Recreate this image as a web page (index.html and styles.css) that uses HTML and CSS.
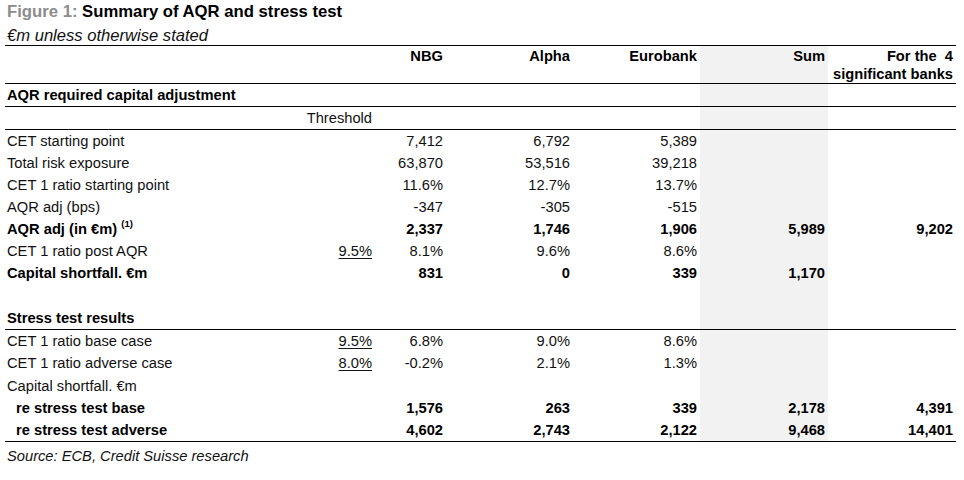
FILE: index.html
```html
<!DOCTYPE html>
<html>
<head>
<meta charset="utf-8">
<link rel="stylesheet" href="styles.css">
</head>
<body>
<div class="figure">
  <div class="title"><span class="fig">Figure 1:</span> Summary of AQR and stress test</div>
  <div class="subtitle">€m unless otherwise stated</div>
  <table class="tbl">
    <colgroup>
      <col class="c-label"><col class="c-thr"><col class="c-nbg"><col class="c-alpha"><col class="c-euro"><col class="c-sum"><col class="c-four">
    </colgroup>
    <tr class="head line-b">
      <td class="lbl"></td><td></td><td class="num">NBG</td><td class="num">Alpha</td><td class="num">Eurobank</td><td class="num sum">Sum</td><td class="num">For the&nbsp; 4<br>significant banks</td>
    </tr>
    <tr class="sect line-b">
      <td class="lbl b">AQR required capital adjustment</td><td></td><td></td><td></td><td></td><td class="sum"></td><td></td>
    </tr>
    <tr class="row line-b">
      <td class="lbl"></td><td class="num">Threshold</td><td></td><td></td><td></td><td class="sum"></td><td></td>
    </tr>
    <tr class="row">
      <td class="lbl">CET starting point</td><td></td><td class="num">7,412</td><td class="num">6,792</td><td class="num">5,389</td><td class="sum"></td><td></td>
    </tr>
    <tr class="row">
      <td class="lbl">Total risk exposure</td><td></td><td class="num">63,870</td><td class="num">53,516</td><td class="num">39,218</td><td class="sum"></td><td></td>
    </tr>
    <tr class="row">
      <td class="lbl">CET 1 ratio starting point</td><td></td><td class="num">11.6%</td><td class="num">12.7%</td><td class="num">13.7%</td><td class="sum"></td><td></td>
    </tr>
    <tr class="row">
      <td class="lbl">AQR adj (bps)</td><td></td><td class="num">-347</td><td class="num">-305</td><td class="num">-515</td><td class="sum"></td><td></td>
    </tr>
    <tr class="row b">
      <td class="lbl">AQR adj (in €m) <sup>(1)</sup></td><td></td><td class="num">2,337</td><td class="num">1,746</td><td class="num">1,906</td><td class="num sum">5,989</td><td class="num">9,202</td>
    </tr>
    <tr class="row">
      <td class="lbl">CET 1 ratio post AQR</td><td class="num"><span class="u">9.5%</span></td><td class="num">8.1%</td><td class="num">9.6%</td><td class="num">8.6%</td><td class="sum"></td><td></td>
    </tr>
    <tr class="row b">
      <td class="lbl">Capital shortfall. €m</td><td></td><td class="num">831</td><td class="num">0</td><td class="num">339</td><td class="num sum">1,170</td><td></td>
    </tr>
    <tr class="row">
      <td class="lbl"></td><td></td><td></td><td></td><td></td><td class="sum"></td><td></td>
    </tr>
    <tr class="sect2 line-b">
      <td class="lbl b">Stress test results</td><td></td><td></td><td></td><td></td><td class="sum"></td><td></td>
    </tr>
    <tr class="row">
      <td class="lbl">CET 1 ratio base case</td><td class="num"><span class="u">9.5%</span></td><td class="num">6.8%</td><td class="num">9.0%</td><td class="num">8.6%</td><td class="sum"></td><td></td>
    </tr>
    <tr class="row">
      <td class="lbl">CET 1 ratio adverse case</td><td class="num"><span class="u">8.0%</span></td><td class="num">-0.2%</td><td class="num">2.1%</td><td class="num">1.3%</td><td class="sum"></td><td></td>
    </tr>
    <tr class="row tall">
      <td class="lbl">Capital shortfall. €m</td><td></td><td></td><td></td><td></td><td class="sum"></td><td></td>
    </tr>
    <tr class="row b">
      <td class="lbl ind">re stress test base</td><td></td><td class="num">1,576</td><td class="num">263</td><td class="num">339</td><td class="num sum">2,178</td><td class="num">4,391</td>
    </tr>
    <tr class="row b line-b">
      <td class="lbl ind">re stress test adverse</td><td></td><td class="num">4,602</td><td class="num">2,743</td><td class="num">2,122</td><td class="num sum">9,468</td><td class="num">14,401</td>
    </tr>
  </table>
  <div class="source">Source: ECB, Credit Suisse research</div>
</div>
</body>
</html>
```

FILE: styles.css
```css
html, body {
  margin: 0;
  padding: 0;
  background: #ffffff;
}
body {
  font-family: "Liberation Sans", Arial, sans-serif;
  color: #000;
}
.figure {
  padding: 0 8px 0 5px;
}
.title {
  font-size: 16.7px;
  font-weight: bold;
  line-height: 22px;
  height: 24px;
  padding-left: 2px;
  padding-top: 1px;
  box-sizing: border-box;
}
.title .fig {
  color: #8c8c8c;
}
.subtitle {
  font-size: 16.6px;
  font-style: italic;
  line-height: 23px;
  height: 21px;
  padding-left: 2px;
  color: #111;
}
.tbl {
  border-collapse: collapse;
  table-layout: fixed;
  width: 951px;
  font-size: 14.7px;
  border-top: 1px solid #000;
}
.c-label { width: 238px; }
.c-thr { width: 132px; }
.c-nbg { width: 71px; }
.c-alpha { width: 127px; }
.c-euro { width: 127px; }
.c-sum { width: 128px; }
.c-four { width: 128px; }
.tbl td {
  padding: 0 3px;
  vertical-align: middle;
  white-space: nowrap;
  color: #111;
}
.tbl td.lbl {
  padding-left: 2px;
}
.tbl td.ind {
  padding-left: 11px;
}
.tbl td.num {
  text-align: right;
}
.tbl td.sum {
  background: #f2f2f2;
}
.tbl .b, .tbl .b td {
  font-weight: bold;
  color: #000;
}
.line-b td {
  border-bottom: 1px solid #000;
}
.head td {
  height: 35px;
  vertical-align: top;
  padding-top: 1px;
  line-height: 18px;
  font-weight: bold;
  color: #000;
}
.sect td {
  height: 22px;
}
.sect2 td {
  height: 23px;
}
.row td {
  height: 22px;
}
.row.tall td {
  height: 23px;
}
.u {
  text-decoration: underline;
  text-underline-offset: 2px;
}
sup {
  font-size: 9.5px;
  vertical-align: 7px;
  line-height: 0;
}
.source {
  font-size: 14.7px;
  font-style: italic;
  padding-left: 2px;
  line-height: 20px;
  padding-top: 4px;
  color: #111;
}
```
